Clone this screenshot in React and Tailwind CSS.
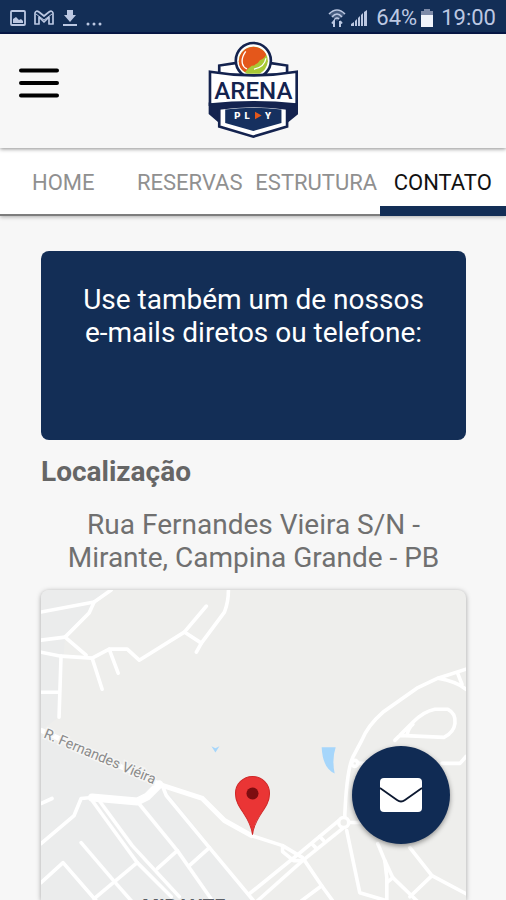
import React, { useState } from 'react';

const tabs = ['HOME', 'RESERVAS', 'ESTRUTURA', 'CONTATO'];

const roads = [
  'M0 22 L53 12 L70 0',
  'M53 12 L48 23 L24 47 L45 65',
  'M0 50 L24 47',
  'M0 62 L20 66 L51 68 L68 59 H86 L98 70 L143 42 L165 16',
  'M143 42 L160 53',
  'M155 62 L160 53 L183 22 Q187 12 187 0',
  'M51 68 L61 99',
  'M68 59 L77 83',
  'M20 66 L18 127',
  'M0 102 H18',
  'M0 213 L11 208',
  'M96 211 L136 260 L171 310',
  'M121 195 L125 205 L168 257 L212 310',
  'M136 260 L116 278',
  'M168 257 L148 275',
  'M96 272 L53 308',
  'M40 252 L75 293 L90 310',
  'M0 292 L22 272 L55 310',
  'M51 207 L40 208 L33 225 L0 253',
  'M51 210 L96 272 L130 306',
  'M58 210 L91 255 L138 306',
  'M210 245 L241 255 L261 267 L280 295 L291 310',
  'M241 255 V261 L252 270 H261',
  'M280 295 L260 310',
  'M297 230 L261 260 L208 303',
  'M302 237 L261 270 L216 310',
  'M278 246 L282 250 M270 253 L274 257',
  'M305 240 L318 302 L345 310',
  'M306 232 H320',
  'M424 79 L396 88 L375 98 L341 122 Q326 135 320 150 L311 167 Q305 180 303 226',
  'M396 88 Q414 91 424 99 M416 84 L420 94',
  'M311 173 H322',
  'M336 253 L343 270 L351 287 L375 310',
  'M343 270 L345 287 V310',
  'M351 287 L345 292',
  'M368 257 L390 285 L424 303',
  'M390 285 L368 306',
  'M353 150 L371 132 Q382 121 393 119 H406 Q414 123 413 133 Q412 142 402 147 L358 145',
  'M365 145 Q367 137 371 134',
  'M400 173 H418 L424 166',
];

const MenuIcon = () => (
  <svg viewBox="0 0 42 32" className="h-8 w-[42px]" stroke="#000" strokeWidth="4" strokeLinecap="round">
    <path d="M2 3.5 H38 M2 16 H38 M2 28.5 H38" />
  </svg>
);

const Logo = () => (
  <svg viewBox="0 0 278 302" className="h-[100px] w-[92px]" role="img" aria-label="Arena Play">
    <g stroke="#14234f" strokeWidth="8" strokeLinejoin="miter">
      <path d="M37 110 V74 L90 66 H188 L242 74 V110 Z" fill="#fff" />
      <path d="M9 190 V219 L37 243 V190 Z M271 190 V219 L242 243 V190 Z" fill="#14234f" />
      <path d="M37 190 V258 L140 289 L242 258 V190 Z" fill="#fff" />
      <circle cx="140" cy="59" r="53" fill="#fff" />
      <path d="M9 93 Q140 115 271 93 V192 Q140 178 9 192 Z" fill="#fff" />
    </g>
    <path d="M7 192 Q140 178 273 192 L242 208 Q140 192 37 208 Z" fill="#14234f" />
    <path d="M55 207 Q140 196 225 207 V248 L140 272 L55 248 Z" fill="#16305f" />
    {/* Ball */}
    <path d="M96 61 A44 44 0 1 1 184 61 Q181 86 159 99 H121 Q98 86 96 61 Z" fill="#a9c936" />
    <path d="M115 94 Q96 83 96 61 A44 44 0 0 1 179 41 Q174 54 160 58 Q152 73 135 75 Q124 83 115 94 Z" fill="#e4571b" />
    <path d="M117 31 Q103 51 107 68 Q110 80 121 84 M178 52 Q174 79 142 85" fill="none" stroke="#fff" strokeWidth="4" />
    <text x="140" y="175" textAnchor="middle" fontSize="73" fontWeight="500" fill="#14234f">ARENA</text>
    <g fill="#fff" fontSize="29" fontWeight="900" textAnchor="middle">
      <text x="92" y="236">P</text>
      <text x="121" y="236">L</text>
      <text x="184" y="236">Y</text>
    </g>
    <path d="M145 214 L165 225 L145 236 Z" fill="#e4571b" />
  </svg>
);

const StatusBar = () => (
  <div className="flex h-[34px] shrink-0 items-center justify-between border-b-2 border-[#07194a] bg-[#132e56] px-2.5 pt-1 text-[22px] leading-7 text-[#bcc8e2]">
    <div className="flex items-center gap-2">
      <svg viewBox="0 0 16 16" className="size-4" fill="none" stroke="currentColor" strokeWidth="1.8">
        <rect x="1" y="1" width="14" height="14" rx="1" />
        <path d="M3 13 V9 L6 7 L9 10 L11 9 L13 11 V13 Z" fill="currentColor" stroke="none" />
      </svg>
      <svg viewBox="0 0 20 16" className="h-4 w-5" fill="none" stroke="currentColor" strokeWidth="1.7" strokeLinejoin="round">
        <path d="M1 14 V3 Q2 0 5 2 L10 6 L15 2 Q18 0 19 3 V14 H15 V7 L10 12 L5 7 V14 Z" />
        <path d="M2 4 L10 10 L18 4" strokeWidth="1" />
      </svg>
      <svg viewBox="0 0 16 18" className="h-[18px] w-4" fill="currentColor">
        <path d="M5 1 H11 V6 H14 L8 13 L2 6 H5 Z M1 15 H15 V17 H1 Z" />
      </svg>
      <svg viewBox="0 0 16 16" className="size-4" fill="currentColor">
        <circle cx="2" cy="14" r="1.5" />
        <circle cx="8" cy="14" r="1.5" />
        <circle cx="14" cy="14" r="1.5" />
      </svg>
    </div>
    <div className="flex items-center gap-1">
      <svg viewBox="0 0 18 20" className="h-5 w-[18px]" fill="none" stroke="currentColor" strokeWidth="1.6">
        <path d="M1 6 Q9 -1 17 6 L9 13 Z" fill="currentColor" fillOpacity="0.3" stroke="none" />
        <path d="M1 6 Q9 -2 17 6 M4 9 Q9 3 14 9 M7 11 Q9 9 11 11" />
        <path d="M6 19 V13 L4 15.5 M12 13 V19 M12 13 L14 15.5" strokeWidth="2" />
      </svg>
      <svg viewBox="0 0 18 18" className="size-[18px]" fill="currentColor">
        <path d="M1 17 V15 L4 13 V17 Z M5 17 V12 L7 10 V17 Z M8 17 V9 L10 7 V17 Z M11 17 V6 L13 4 V17 Z M14 17 V3 L17 1 V17 Z" />
      </svg>
      <span className="ml-1">64%</span>
      <svg viewBox="0 0 12 18" className="h-[18px] w-3">
        <path d="M3 0 H9 V2 H12 V7 H0 V2 H3 Z" fill="#7e8ba8" />
        <path d="M0 6 H12 V18 H0 Z" fill="#f1f4fa" />
      </svg>
      <span className="ml-1">19:00</span>
    </div>
  </div>
);

const LocationMap = () => (
  <div className="min-h-0 flex-1 overflow-hidden rounded-t-lg bg-[#eeeeec] shadow-[0_1px_5px_rgba(0,0,0,0.35)]">
    <svg viewBox="0 0 424 310" preserveAspectRatio="xMidYMin slice" className="h-full w-full">
      <path d="M0 0 H65 L24 47 L18 127 L0 140 Z" fill="#ebecec" />
      <path d="M0 145 L121 195 L212 310 H0 Z" fill="#ebecec" />
      <g fill="none" stroke="#fff" strokeWidth="3.6" strokeLinecap="round" strokeLinejoin="round">
        {roads.map((d) => (
          <path key={d} d={d} />
        ))}
        <path d="M0 140 L121 195 L161 208 L183 230 L210 245" strokeWidth="5" />
        <path d="M51 207 L96 211 L106 206 L118 194" strokeWidth="8" />
        <circle cx="302" cy="232" r="5" fill="#eeeeec" />
        <circle cx="313" cy="173" r="3" fill="#eeeeec" />
      </g>
      <path d="M280 157 H294 Q290 169 293 183 Q281 178 280 157 Z" fill="#a6d6fb" />
      <path d="M170 156 L174 158 L178 156 L174 162 Z" fill="#a6d6fb" />
      <text
        transform="translate(2 147) rotate(23)"
        fontSize="14"
        fill="#8b8b8b"
        stroke="#f5f5f4"
        strokeWidth="3"
        paintOrder="stroke"
      >
        R. Fernandes Viéira
      </text>
      <text x="101" y="321" fontSize="19" fontWeight="700" fill="#5c6066">MIRANTE</text>
      <path d="M211 244 C209 225 194 218 194 203 A17 17 0 0 1 228 203 C228 218 213 225 211 244 Z" fill="#ea3535" stroke="#d02828" />
      <circle cx="211" cy="203" r="6" fill="#7d0d10" />
    </svg>
  </div>
);

const App = () => {
  const [active, setActive] = useState('CONTATO');

  return (
    <div className="flex h-screen flex-col overflow-hidden bg-[#f7f7f7] font-['Roboto',sans-serif]">
      <StatusBar />

      {/* Header */}
      <header className="relative z-10 grid h-[114px] shrink-0 grid-cols-[1fr_auto_1fr] items-center bg-[#f7f7f7] px-[19px] shadow-[0_1px_4px_rgba(0,0,0,0.45)]">
        <button type="button" aria-label="Menu" className="justify-self-start pb-4">
          <MenuIcon />
        </button>
        <Logo />
      </header>

      {/* Tabs */}
      <nav className="grid h-[68px] shrink-0 grid-cols-4 border-b-2 border-[#7d7d7d] bg-white shadow-[0_1px_4px_rgba(0,0,0,0.3)]">
        {tabs.map((tab) => (
          <button
            key={tab}
            type="button"
            onClick={() => setActive(tab)}
            className={`-mb-0.5 flex items-center justify-center border-b-[10px] pt-3 text-[22px] leading-6 ${
              active === tab ? 'border-[#132e56] text-[#111]' : 'border-transparent text-[#909090]'
            }`}
          >
            {tab}
          </button>
        ))}
      </nav>

      {/* Content */}
      <main className="flex min-h-0 flex-1 flex-col pt-[35px] pr-10 pl-[41px]">
        <section className="h-[189px] shrink-0 rounded-lg bg-[#132e56] px-8 pt-8 text-center text-[28px] leading-[33px] text-white">
          Use também um de nossos e-mails diretos ou telefone:
        </section>
        <h2 className="pt-4 text-[28px] leading-8 font-bold text-[#666]">Localização</h2>
        <p className="px-6 pt-5 pb-4 text-center text-[28px] leading-[33px] text-[#707070]">
          Rua Fernandes Vieira S/N - Mirante, Campina Grande - PB
        </p>
        <LocationMap />
      </main>

      <button
        type="button"
        aria-label="Enviar e-mail"
        className="fixed right-14 bottom-14 flex size-[98px] items-center justify-center rounded-full bg-[#102b54] shadow-[0_2px_5px_rgba(0,0,0,0.4)]"
      >
        <svg viewBox="0 0 44 36" className="h-9 w-11">
          <rect x="1" y="1" width="42" height="34" rx="4" fill="#fff" />
          <path d="M1 11 L18 23 Q22 26 26 23 L43 11" fill="none" stroke="#0c1830" strokeWidth="1.8" />
        </svg>
      </button>
    </div>
  );
};

export default App;
